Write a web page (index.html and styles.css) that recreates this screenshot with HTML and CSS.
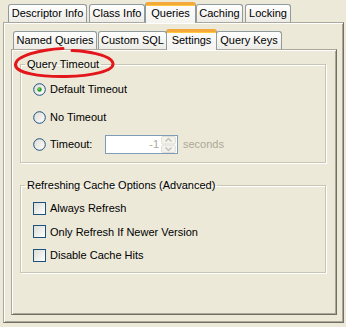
FILE: index.html
```html
<!DOCTYPE html>
<html>
<head>
<meta charset="utf-8">
<link rel="stylesheet" href="styles.css">
</head>
<body>
<div class="window">
  <div class="tabs outer-tabs">
    <div class="tab t-desc">Descriptor Info</div>
    <div class="tab t-class">Class Info</div>
    <div class="tab selected t-queries">Queries</div>
    <div class="tab t-caching">Caching</div>
    <div class="tab t-locking">Locking</div>
  </div>
  <div class="panel outer-panel">
    <div class="tabs inner-tabs">
      <div class="tab t-named">Named Queries</div>
      <div class="tab t-sql">Custom SQL</div>
      <div class="tab selected t-settings">Settings</div>
      <div class="tab t-keys">Query Keys</div>
    </div>
    <div class="panel inner-panel">
      <fieldset class="group group-timeout">
        <legend>Query Timeout</legend>
        <div class="rows rows-radio">
          <div class="row">
            <svg class="radio" width="13" height="13" viewBox="0 0 13 13">
              <defs>
                <linearGradient id="rg" x1="0" y1="0" x2="1" y2="1">
                  <stop offset="0" stop-color="#DCDAD2"/>
                  <stop offset="1" stop-color="#FFFFFF"/>
                </linearGradient>
              </defs>
              <circle cx="6.5" cy="6.5" r="5.8" fill="url(#rg)" stroke="#1C5180" stroke-width="1"/>
              <circle cx="6.5" cy="6.5" r="2.2" fill="#21A121"/>
              <circle cx="6" cy="6" r="0.9" fill="#7BD47B"/>
            </svg>
            <span>Default Timeout</span>
          </div>
          <div class="row">
            <svg class="radio" width="13" height="13" viewBox="0 0 13 13">
              <circle cx="6.5" cy="6.5" r="5.8" fill="url(#rg)" stroke="#1C5180" stroke-width="1"/>
            </svg>
            <span>No Timeout</span>
          </div>
          <div class="row row-timeout">
            <svg class="radio" width="13" height="13" viewBox="0 0 13 13">
              <circle cx="6.5" cy="6.5" r="5.8" fill="url(#rg)" stroke="#1C5180" stroke-width="1"/>
            </svg>
            <span class="timeout-label">Timeout:</span>
            <div class="field">
              <span class="field-value">-1</span>
              <div class="spinner">
                <svg width="15" height="17" viewBox="0 0 15 17">
                  <rect x="0.5" y="0.5" width="14" height="7.5" rx="1.5" fill="#F3F2EC" stroke="#E2E0D6"/>
                  <rect x="0.5" y="9" width="14" height="7.5" rx="1.5" fill="#F3F2EC" stroke="#E2E0D6"/>
                  <path d="M4.5 5.5 L7.5 2.5 L10.5 5.5" fill="none" stroke="#C2C0B6" stroke-width="1.3"/>
                  <path d="M4.5 11.5 L7.5 14.5 L10.5 11.5" fill="none" stroke="#C2C0B6" stroke-width="1.3"/>
                </svg>
              </div>
            </div>
            <span class="seconds">seconds</span>
          </div>
        </div>
      </fieldset>
      <fieldset class="group group-cache">
        <legend>Refreshing Cache Options (Advanced)</legend>
        <div class="rows rows-check">
          <div class="row">
            <svg class="check" width="13" height="13" viewBox="0 0 13 13">
              <defs>
                <linearGradient id="cg" x1="0" y1="0" x2="1" y2="1">
                  <stop offset="0" stop-color="#DCDCD4"/>
                  <stop offset="1" stop-color="#FFFFFF"/>
                </linearGradient>
              </defs>
              <rect x="0.5" y="0.5" width="12" height="12" fill="url(#cg)" stroke="#1C5180"/>
            </svg>
            <span>Always Refresh</span>
          </div>
          <div class="row">
            <svg class="check" width="13" height="13" viewBox="0 0 13 13">
              <rect x="0.5" y="0.5" width="12" height="12" fill="url(#cg)" stroke="#1C5180"/>
            </svg>
            <span>Only Refresh If Newer Version</span>
          </div>
          <div class="row">
            <svg class="check" width="13" height="13" viewBox="0 0 13 13">
              <rect x="0.5" y="0.5" width="12" height="12" fill="url(#cg)" stroke="#1C5180"/>
            </svg>
            <span>Disable Cache Hits</span>
          </div>
        </div>
      </fieldset>
    </div>
  </div>
</div>
<svg class="annotation" width="346" height="327" viewBox="0 0 346 327">
  <path d="M63 48.5 C40 49.5 16 56 15.5 64.5 C15 73 40 77 66 76.5 C92 76 114 71 113 63.5 C112 57 98 53.5 84 51.5 C80 51 76 50.5 72 50.5" fill="none" stroke="#E3161B" stroke-width="3" stroke-linecap="round"/>
</svg>
</body>
</html>
```

FILE: styles.css
```css
* { box-sizing: border-box; }

html, body {
  margin: 0;
  padding: 0;
}

body {
  width: 346px;
  height: 327px;
  overflow: hidden;
  position: relative;
  background: #ECE9D8;
  font-family: "Liberation Sans", Arial, sans-serif;
  font-size: 11px;
  color: #000;
}

.window {
  height: 327px;
  padding: 2px 2px 4px 3px;
  display: flex;
  flex-direction: column;
}

.tabs {
  display: flex;
  align-items: flex-end;
  height: 20px;
  position: relative;
  z-index: 2;
  flex: none;
}

.outer-tabs {
  padding-left: 5px;
  gap: 2px;
}

.inner-tabs {
  padding-left: 2px;
  gap: 1px;
}

.tab {
  height: 18px;
  border: 1px solid #919B9C;
  border-bottom: none;
  border-radius: 3px 3px 0 0;
  background: linear-gradient(#FFFFFF, #ECEBE6);
  line-height: 16px;
  text-align: center;
  white-space: nowrap;
}

.tab.selected {
  height: 21px;
  margin: 0 -2px -1px -2px;
  border-top: 3px solid #F4A93A;
  box-shadow: inset 0 1px 0 #FFC73C;
  background: linear-gradient(#FCFCFE, #F4F3EE);
  line-height: 17px;
  position: relative;
  z-index: 3;
}

.t-desc { width: 79px; }
.t-class { width: 56px; }
.t-queries { width: 51px; }
.t-caching { width: 47px; }
.t-locking { width: 46px; }

.t-named { width: 84px; }
.t-sql { width: 69px; }
.t-settings { width: 51px; }
.t-keys { width: 66px; }

.panel {
  background: #ECE9D8;
  border: 1px solid;
  border-color: #ACA899 #716F64 #716F64 #ACA899;
  box-shadow: inset 1px 1px 0 #FFFFFF, inset -1px -1px 0 #ACA899;
}

.outer-panel {
  flex: 1;
  display: flex;
  flex-direction: column;
  padding: 6px 6px 7px 7px;
}

.inner-panel {
  flex: 1;
  padding: 0 10px 0 8px;
  display: flex;
  flex-direction: column;
}

.group {
  margin: 0;
  padding: 0;
  border: 1px solid #C8C5B4;
  box-shadow: 1px 1px 0 #FFFFFF, inset 1px 1px 0 #FFFFFF;
  min-width: 0;
}

.group legend {
  margin-left: 4px;
  padding: 0 2px;
  line-height: 13px;
  height: 13px;
}

.group-timeout {
  margin-top: 8px;
}

.group-cache {
  margin-top: 16px;
}

.rows {
  display: flex;
  flex-direction: column;
  padding-left: 12px;
}

.rows-radio {
  padding-top: 8px;
  padding-bottom: 8px;
  gap: 8px;
}

.rows-radio .row-timeout {
  margin-top: -1px;
}

.rows-check {
  padding-top: 6px;
  padding-bottom: 7px;
  gap: 3.5px;
}

.row {
  display: flex;
  align-items: center;
  height: 20px;
  gap: 4px;
}

.radio, .check {
  flex: none;
  display: block;
}

.timeout-label {
  width: 51px;
}

.field {
  width: 73px;
  height: 19px;
  border: 1px solid #7F9DB9;
  background: #FFFFFF;
  display: flex;
  align-items: center;
  justify-content: flex-end;
  padding-right: 1px;
  gap: 2px;
}

.field-value {
  color: #ACA899;
}

.spinner {
  width: 15px;
  height: 17px;
  display: flex;
}

.spinner svg {
  display: block;
}

.seconds {
  color: #ACA899;
  margin-left: 1px;
}

.annotation {
  position: absolute;
  left: 0;
  top: 0;
  pointer-events: none;
  z-index: 10;
}
```
